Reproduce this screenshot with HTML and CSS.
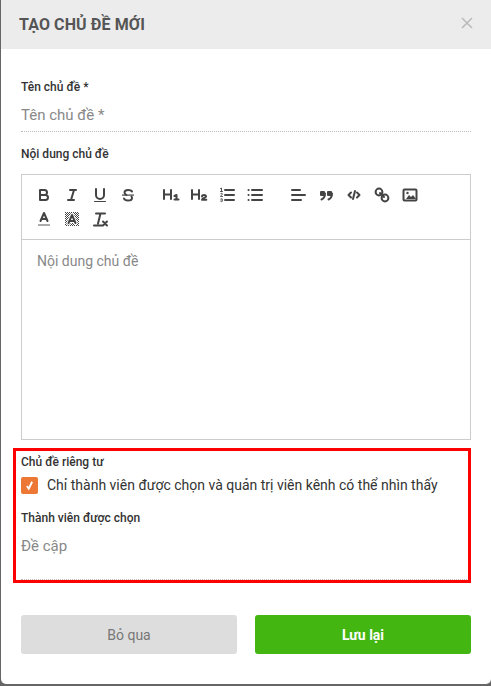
FILE: index.html
```html
<!DOCTYPE html>
<html lang="vi">
<head>
<meta charset="utf-8">
<title>Tạo chủ đề mới</title>
<link rel="stylesheet" href="styles.css">
</head>
<body>
<div class="modal">
  <header class="modal-head">
    <h1 class="modal-title">TẠO CHỦ ĐỀ MỚI</h1>
    <svg class="close" viewBox="0 0 12 12"><path d="M1 1l10 10M11 1L1 11"/></svg>
  </header>
  <div class="modal-body">
    <label class="label first">Tên chủ đề *</label>
    <div class="input">Tên chủ đề *</div>
    <label class="label second">Nội dung chủ đề</label>
    <div class="editor">
      <div class="toolbar">
        <span class="group">
          <button class="tb"><svg viewBox="0 0 18 18"><path class="st" d="M5 4h4.500a2.500 2.500 0 0 1 0 5H5zM5 9h5.500a2.500 2.500 0 0 1 0 5H5z"/></svg></button>
          <button class="tb"><svg viewBox="0 0 18 18"><path class="st" d="M7 4h6M5 14h6M8 14l3-10"/></svg></button>
          <button class="tb"><svg viewBox="0 0 18 18"><path class="st" d="M5 3v6a4 4 0 0 0 8 0V3"/><rect class="fl" x="3" y="15" width="12" height="1" rx=".5"/></svg></button>
          <button class="tb"><svg viewBox="0 0 18 18"><path class="st" d="M13 5.500C12.500 4.500 11 4 9 4 7 4 5.500 5 5.500 6.500c0 1 .7 1.800 1.800 2.500M12.500 10.500c.3.400.5.900.5 1.500 0 1.500-1.700 2.500-4 2.500-2 0-3.500-.7-4-2"/><rect class="fl" x="3" y="8.500" width="12" height="1.200"/></svg></button>
        </span>
        <span class="group">
          <button class="tb"><svg viewBox="0 0 18 18"><path class="st" d="M2 4v9M9 4v9M2 8.500h7"/><path class="st" d="M12.500 10l2-1v4.500M12.500 13.500h4"/></svg></button>
          <button class="tb"><svg viewBox="0 0 18 18"><path class="st" d="M2 4v9M9 4v9M2 8.500h7"/><path class="st" d="M12 10.500c0-2 4-2 4 0 0 1.300-4 1.500-4 3.300h4.300"/></svg></button>
          <button class="tb"><svg viewBox="0 0 18 18"><path class="st" d="M7 4h9M7 9h9M7 14h9"/><path class="st hair" d="M2.500 2.500l1-.5v3.500M2.500 5.500h2M2.500 7.800c.5-.8 2-.6 2 .3 0 .8-2 1.200-2 2.400h2M2.600 13c.6-.5 1.900-.4 1.900.3 0 .5-.5.700-1 .7.500 0 1.100.2 1.100.8 0 .8-1.400 1-2 .4"/></svg></button>
          <button class="tb"><svg viewBox="0 0 18 18"><path class="st" d="M6 4h10M6 9h10M6 14h10M2.500 4h.1M2.500 9h.1M2.500 14h.1"/></svg></button>
        </span>
        <span class="group">
          <button class="tb"><svg viewBox="0 0 18 18"><path class="st" d="M3 4h8M3 9h13M3 14h9"/></svg></button>
          <button class="tb"><svg viewBox="0 0 18 18"><rect class="fl" x="3" y="5" width="5" height="5" rx="1"/><rect class="fl" x="10" y="5" width="5" height="5" rx="1"/><path class="st" d="M8 7.500c0 3-1 5-3.500 6M15 7.500c0 3-1 5-3.500 6"/></svg></button>
          <button class="tb"><svg viewBox="0 0 18 18"><path class="st" d="M6 6.500L3.500 9 6 11.500M12 6.500L14.500 9 12 11.500M10 5l-2 8"/></svg></button>
          <button class="tb"><svg viewBox="0 0 18 18"><circle class="ring" cx="6" cy="6" r="3.400"/><circle class="ring" cx="12" cy="12" r="3.400"/><path class="st" d="M7 7l4 4"/></svg></button>
          <button class="tb"><svg viewBox="0 0 18 18"><rect class="st" x="2.500" y="3.500" width="13" height="11" rx="1"/><path class="fl" d="M5 13l3-4 2 2 2-2 3 4z"/><circle class="fl" cx="6.500" cy="7" r="1.200"/></svg></button>
        </span>
        <span class="group">
          <button class="tb"><svg viewBox="0 0 18 18"><path class="st" d="M5.500 11L9 3l3.500 8M6.500 9h5"/><rect class="under" x="3" y="14" width="12" height="2" rx=".5"/></svg></button>
          <button class="tb"><svg viewBox="0 0 18 18"><defs><pattern id="checker" width="2" height="2" patternUnits="userSpaceOnUse"><rect class="fl" width="1" height="1"/><rect class="fl" x="1" y="1" width="1" height="1"/></pattern></defs><rect class="dots" x="2" y="2" width="14" height="14"/><path class="halo" d="M5.500 13L9 5l3.500 8M6.500 11h5"/><path class="st" d="M5.500 13L9 5l3.500 8M6.500 11h5"/></svg></button>
          <button class="tb"><svg viewBox="0 0 18 18"><path class="st" d="M5 3.500h9M9.500 3.500L7 13.500M3 15.500h8"/><path class="st" d="M12 11.500l4 4M16 11.500l-4 4"/></svg></button>
        </span>
      </div>
      <div class="editor-area">Nội dung chủ đề</div>
    </div>
    <label class="label private">Chủ đề riêng tư</label>
    <div class="check-row">
      <span class="check"><svg viewBox="0 0 16 16"><path d="M5.500 8.500l1.800 2.500 3.200-6.500"/></svg></span>
      <span class="check-text">Chỉ thành viên được chọn và quản trị viên kênh có thể nhìn thấy</span>
    </div>
    <label class="label members">Thành viên được chọn</label>
    <div class="input mention">Đề cập</div>
    <div class="actions">
      <button class="btn cancel">Bỏ qua</button>
      <button class="btn save">Lưu lại</button>
    </div>
  </div>
  <div class="highlight"></div>
</div>
</body>
</html>
```
FILE: styles.css
```css
* { box-sizing: border-box; }
html, body { margin: 0; height: 100%; }
body {
  background: #666;
  font-family: Roboto, "Liberation Sans", sans-serif;
  overflow: hidden;
  padding-left: 1px;
}
.modal {
  position: relative;
  width: 490px;
  height: 684px;
  background: #fff;
  border-radius: 0 0 5px 5px;
}
.modal-head {
  height: 49px;
  background: #ececec;
  display: flex;
  align-items: center;
  justify-content: space-between;
  padding: 0 18px 0 18px;
}
.modal-title {
  margin: 0;
  font-size: 16px;
  font-weight: 700;
  letter-spacing: .1px;
  color: #555;
  line-height: 20px;
}
.close { width: 12px; height: 12px; margin-top: -3px; }
.close path { fill: none; stroke: #bbb; stroke-width: 1.600; }
.modal-body { padding: 0 20px; }
.label {
  display: block;
  font-size: 12px;
  font-weight: 500;
  line-height: 16px;
  color: #333;
}
.first { padding-top: 30px; }
.input {
  height: 37px;
  font-size: 15px;
  line-height: 20px;
  padding-top: 10px;
  color: #888;
  border-bottom: 1px dotted #bbb;
}
.second { padding-top: 14px; }
.editor {
  margin-top: 12px;
  height: 266px;
  border: 1px solid #ccc;
}
.toolbar {
  display: flex;
  flex-wrap: wrap;
  align-content: flex-start;
  height: 65px;
  padding: 8px;
  border-bottom: 1px solid #ccc;
}
.group { display: flex; margin-right: 15px; }
.tb {
  width: 28px;
  height: 24px;
  padding: 3px 5px;
  border: 0;
  background: none;
}
.tb svg { display: block; width: 18px; height: 18px; }
.st { fill: none; stroke: #444; stroke-width: 2; stroke-linecap: round; stroke-linejoin: round; }
.hair { stroke-width: .9; }
.fl { fill: #444; }
.ring { fill: none; stroke: #444; stroke-width: 2; }
.under { fill: #aaa; }
.dots { fill: url(#checker); }
.halo { fill: none; stroke: #fff; stroke-width: 4; stroke-linecap: round; stroke-linejoin: round; }
.editor-area {
  padding: 12px 15px;
  font-size: 14px;
  line-height: 18px;
  color: #888;
}
.private { padding-top: 14px; }
.check-row { display: flex; align-items: center; margin-top: 6px; height: 18px; }
.check {
  width: 17px;
  height: 17px;
  border-radius: 2px;
  background: #ed7735;
  flex: none;
}
.check svg { display: block; width: 17px; height: 17px; }
.check path { fill: none; stroke: #fff; stroke-width: 1.800; }
.check-text { margin-left: 9px; font-size: 14px; line-height: 18px; color: #333; white-space: nowrap; }
.members { padding-top: 16px; }
.mention { height: 54px; padding-top: 10px; }
.actions { display: flex; gap: 18px; margin-top: 35px; }
.btn {
  flex: 1;
  height: 39px;
  border: 0;
  border-radius: 3px;
  font-family: inherit;
  font-size: 14px;
}
.cancel { background: #ddd; color: #777; }
.save { background: #43b612; color: #fff; font-weight: 700; }
.highlight {
  position: absolute;
  left: 12px;
  top: 448px;
  width: 458px;
  height: 135px;
  border: 3px solid #f00;
  pointer-events: none;
}
```
